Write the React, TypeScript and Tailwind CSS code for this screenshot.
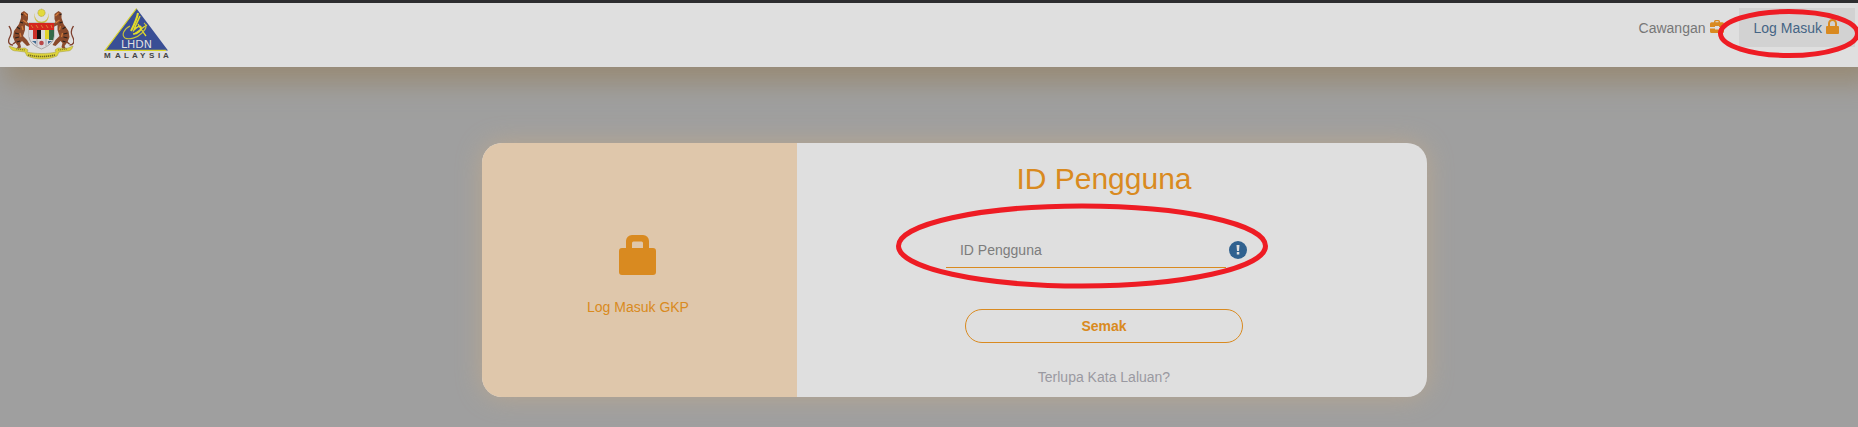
import { useState } from "react";

function Crest() {
  return (
    <svg viewBox="0 0 66 52" className="h-[52px] w-[66px]" role="img" aria-label="Jata Negara">
      {/* crescent and star */}
      <path d="M27 5a7.2 7.2 0 1 0 13 0a6.8 6.8 0 1 1-13 0z" fill="#cfc04a" />
      <circle cx="33.5" cy="4.8" r="3.6" fill="#e3da3c" stroke="#a89c3a" strokeWidth="0.8" strokeDasharray="1 0.6" />
      {/* tigers */}
      <g id="tiger">
        <path
          d="M13 5l3-2l4 3v5l-1 3l4 3l-2 2l-4-2v5l-2 6l4 4l3 5l-3 1l-5-5l-2 2l1 4l-2 3h-3l2-4l-3-4l-2-5l1-6l5-7l2-6z"
          fill="#8a4a2b"
        />
        <path d="M5 37c-4 0-5-3-4-6c1-3 3-5 2-8c0-2-1-3-2-5" fill="none" stroke="#7d3f2d" strokeWidth="1.3" />
        <path d="M5 36l4-3" stroke="#7d3f2d" strokeWidth="1.5" />
        <path d="M13 6l2 1M12 14l3 1M9 19l3 2M7 25l4 1M7 30l4-1M9 34l3-1" stroke="#2b211d" strokeWidth="1.1" />
        <path d="M16 5l3 3M15 12l4 3M14 18l1 4M12 25l1 4" stroke="#d17a3a" strokeWidth="1.3" />
      </g>
      <use href="#tiger" transform="translate(66.500 0) scale(-1 1)" />
      {/* shield */}
      <path d="M21 15h25v13c0 6-5 10-12.5 13C26 38 21 34 21 28z" fill="#d9d9dc" stroke="#77716a" strokeWidth="0.5" />
      <path d="M21 15h25v7H21z" fill="#d5261d" />
      <path d="M23 17l2 3M28 17l2 3M33 17l2 3M38 17l2 3M43 17l1 3" stroke="#d88a35" strokeWidth="0.9" />
      <path d="M21 22h4v9l-4-2z" fill="#d7d7df" />
      <path d="M25 22h4v9h-4z" fill="#c9302a" />
      <path d="M29 22h4v9h-4z" fill="#141414" />
      <path d="M33 22h4v9h-4z" fill="#d9d9d9" />
      <path d="M37 22h4v9h-4z" fill="#e1d32b" />
      <path d="M41 22h5v6l-1 4h-4z" fill="#356a4a" />
      <path d="M24 33h4v3zM40 33h4l-4 3z" fill="#416b91" />
      <circle cx="33.5" cy="35" r="2.3" fill="#b94848" />
      <path d="M29 31v7M38 31v7" stroke="#8c8795" strokeWidth="0.6" />
      {/* ribbon */}
      <path
        d="M1 38l6 2c3 1 7 0 10 0l3 2l-1 2c9 2 20 2 29 0l-1-2l3-2c3 0 7 1 10 0l5-2c-1 4-3 5-6 5l-8 1l-2 4c-9 4-21 4-30 0l-2-4l-8-1c-4 0-6-1-8-5z"
        fill="#ddd33a"
        stroke="#a39b3c"
        strokeWidth="0.5"
      />
      <path d="M20 47c9 2 18 2 27 0" fill="none" stroke="#736b25" strokeWidth="1.6" strokeDasharray="1.3 0.7" />
      <path d="M8 41l9 1M59 41l-9 1" stroke="#89802d" strokeWidth="1.2" strokeDasharray="1.3 0.7" />
    </svg>
  );
}

function LhdnLogo() {
  return (
    <svg viewBox="0 0 66 52" className="h-[52px] w-[66px]" role="img" aria-label="LHDN Malaysia">
      <path d="M32.5 0.5L64 42.5H1z" fill="#394e95" />
      <path d="M32.5 0.5L1 42.3h61" fill="none" stroke="#dad52b" strokeWidth="1.2" />
      <path d="M34 5c-1 6-4 12-7 18" fill="none" stroke="#e3dc2a" strokeWidth="2" />
      <path d="M36 8c-2 5-5 10-6 14c3-3 6-5 7-3c1 3-3 7-8 7" fill="none" stroke="#e3dc2a" strokeWidth="1.5" />
      <path d="M34 16c2 4 5 8 8 12M43 17c-5 3-9 7-13 9" fill="none" stroke="#e3dc2a" strokeWidth="1.3" />
      <path d="M26 18c-6 3-9 9-5 12c4 2 12 0 17-5c5-5 5-8 2-10" fill="none" stroke="#c9c63a" strokeWidth="1.1" />
      <text x="32.5" y="40" textAnchor="middle" className="fill-[#dfdfdf] font-['DejaVu_Sans'] text-[11px]">
        LHDN
      </text>
      <text x="0 11 20 28 36 45 54 59" y="50" className="fill-[#444444] font-['Liberation_Sans'] text-[8px] font-bold">
        MALAYSIA
      </text>
    </svg>
  );
}

function LockIcon({ className }: { className: string }) {
  return (
    <svg viewBox="0 0 37 40" className={className} fill="currentColor" aria-hidden="true">
      <path
        fillRule="evenodd"
        d="M7 13V6a6 6 0 0 1 6-6h11a6 6 0 0 1 6 6v7h4a3 3 0 0 1 3 3v21a3 3 0 0 1-3 3H3a3 3 0 0 1-3-3V16a3 3 0 0 1 3-3zM13 13h11V8a1.500 1.500 0 0 0-1.500-1.500h-8A1.500 1.500 0 0 0 13 8z"
      />
    </svg>
  );
}

function SmallLockIcon() {
  return (
    <svg viewBox="0 0 13 15" className="h-[15px] w-[13px]" fill="currentColor" aria-hidden="true">
      <path
        fillRule="evenodd"
        d="M2 7V4.500a4.500 4.500 0 0 1 9 0V7h1a1 1 0 0 1 1 1v6a1 1 0 0 1-1 1H1a1 1 0 0 1-1-1V8a1 1 0 0 1 1-1zM4 7h5V4.500a2.500 2.500 0 0 0-5 0z"
      />
    </svg>
  );
}

function BriefcaseIcon() {
  return (
    <svg viewBox="0 0 14 13" className="h-[13px] w-3.5" fill="currentColor" aria-hidden="true">
      <path
        fillRule="evenodd"
        d="M4 2.200V1.500A1.500 1.500 0 0 1 5.500 0h3A1.500 1.500 0 0 1 10 1.500v.7h2.500A1.500 1.500 0 0 1 14 3.700V7H9V6H5v1H0V3.700A1.500 1.500 0 0 1 1.500 2.200zM5.500 2.200h3v-1h-3zM0 8.500h5v1h4v-1h5v3a1.500 1.500 0 0 1-1.500 1.500h-11A1.500 1.500 0 0 1 0 11.500z"
      />
    </svg>
  );
}

export default function App() {
  const [userId, setUserId] = useState("");

  return (
    <div className="min-h-screen overflow-hidden bg-[#9f9f9f] font-['Liberation_Sans',Arial,sans-serif] text-sm text-[#777777]">
      <header className="flex h-[67px] items-start justify-between border-t-3 border-[#2d2d2f] bg-[#dfdfdf] pt-[5px] pr-[3px] pl-2 shadow-[10px_10px_24px_6px_#988b76]">
        <div className="flex gap-[30px]">
          <Crest />
          <LhdnLogo />
        </div>
        <nav className="flex">
          <a href="#cawangan" className="flex h-[39px] items-center gap-1 px-[15px]">
            Cawangan
            <span className="pb-[3px] text-[#d98a20]">
              <BriefcaseIcon />
            </span>
          </a>
          <a
            href="#log-masuk"
            className="relative flex h-[39px] items-center gap-1 bg-[#d2d2d2] pr-4 pl-[15px] text-[#456585]"
          >
            Log Masuk
            <span className="pb-[3px] text-[#d98a20]">
              <SmallLockIcon />
            </span>
            <svg viewBox="0 0 142 50" className="pointer-events-none absolute top-0 -left-[21px] h-[50px] w-[142px]" aria-hidden="true">
              <ellipse cx="71" cy="25.500" rx="68.500" ry="22" fill="none" stroke="#ee1c24" strokeWidth="5" />
            </svg>
          </a>
        </nav>
      </header>

      <main className="grid grid-cols-[482fr_945fr_431fr] pt-[76px]">
        <section className="col-start-2 flex rounded-[20px] bg-[#dfdfdf] shadow-[0_0_26px_#b9a790]">
          <div className="flex w-1/3 flex-col items-center gap-[22px] rounded-l-[20px] bg-[#dfc7ab] pt-[92px] pr-[3px] text-[#d98a20]">
            <LockIcon className="h-10 w-[37px]" />
            <p>Log Masuk GKP</p>
          </div>
          <form
            className="flex w-2/3 flex-col items-center pt-[18px] pr-4 pb-[10px]"
            onSubmit={(e) => e.preventDefault()}
          >
            <h1 className="text-[30px] leading-9 text-[#d98a20]">ID Pengguna</h1>
            <div className="relative mt-[33px] flex w-[316px] items-center">
              <input
                type="text"
                aria-label="ID Pengguna"
                placeholder="ID Pengguna"
                value={userId}
                onChange={(e) => setUserId(e.target.value)}
                className="h-[38px] w-[280px] border-b border-[#d98a20] px-[14px] pt-[2px] outline-none placeholder:text-[#7c7c7c]"
              />
              <button
                type="button"
                aria-label="Maklumat ID Pengguna"
                className="mt-[2px] ml-[3px] flex size-[18px] items-center justify-center rounded-full bg-[#30618f] text-[#dfdfdf]"
              >
                <svg viewBox="0 0 18 18" className="size-[18px]" fill="currentColor" aria-hidden="true">
                  <path d="M7.500 4h3l-.5 6H8zM7.800 11h2.500v2.500H7.800z" />
                </svg>
              </button>
              <svg
                viewBox="0 0 372 86"
                className="pointer-events-none absolute -top-[27px] -left-[50px] h-[86px] w-[372px] max-w-none"
                aria-hidden="true"
              >
                <ellipse cx="186" cy="43" rx="183.500" ry="40" fill="none" stroke="#ee1c24" strokeWidth="5" />
              </svg>
            </div>
            <button
              type="submit"
              className="mt-[41px] h-[34px] w-[278px] rounded-full border border-[#d98a20] font-bold text-[#d98a20]"
            >
              Semak
            </button>
            <a href="#terlupa" className="mt-6 text-[#9a99a1]">
              Terlupa Kata Laluan?
            </a>
          </form>
        </section>
      </main>
    </div>
  );
}
